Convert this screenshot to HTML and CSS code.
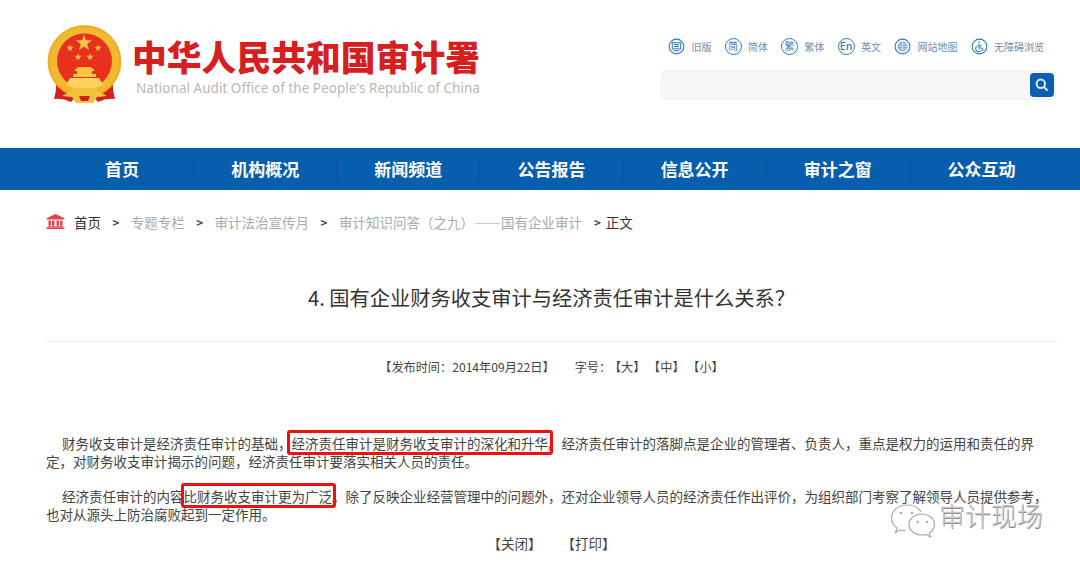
FILE: index.html
```html
<!DOCTYPE html>
<html lang="zh-CN">
<head>
<meta charset="utf-8">
<title>国有企业财务收支审计与经济责任审计是什么关系</title>
<link rel="stylesheet" href="styles.css">
</head>
<body>
<header class="top">
  <div class="brand">
    <svg class="emblem" viewBox="0 0 75 79" aria-hidden="true">
      <defs><path id="st" d="M0-10 2.350-3.240 9.510-3.090 3.800 1.240 5.880 8.090 0 4 -5.880 8.090 -3.800 1.240 -9.510-3.090 -2.350-3.240z"/></defs>
      <path d="M9 52 Q10 64 7 74 Q16 73 24 77 L34 66 Z" fill="#d3201f"/>
      <path d="M66 52 Q65 64 68 74 Q59 73 51 77 L41 66 Z" fill="#d3201f"/>
      <ellipse cx="37.500" cy="36.500" rx="37" ry="36.500" fill="#f2b92f"/>
      <ellipse cx="37.500" cy="36.500" rx="35.500" ry="35" fill="none" stroke="#e6a01d" stroke-width=".8"/>
      <ellipse cx="37.500" cy="36" rx="27.500" ry="27.500" fill="#e8301f"/>
      <use href="#st" transform="translate(37 18) scale(.85)" fill="#f9c63d"/>
      <use href="#st" transform="translate(23 23) scale(.38)" fill="#f9c63d"/>
      <use href="#st" transform="translate(51 23) scale(.38)" fill="#f9c63d"/>
      <use href="#st" transform="translate(31 32) scale(.38)" fill="#f9c63d"/>
      <use href="#st" transform="translate(43 32) scale(.38)" fill="#f9c63d"/>
      <path d="M31 42 H44 L48 46 H45 V49 H49 V52 H26 V49 H30 V46 H27 Z" fill="#f9c63d"/>
      <path d="M23 53 H52 L56 60 Q37.500 68 19 60 Z" fill="#fbd25e"/>
      <path d="M26 65 Q31 60 37.500 64 Q44 60 49 65 L60 71 L50 72 L46 78 H29 L25 72 L15 71 Z" fill="#f5c23e"/>
      <path d="M32 71 H43 L41 76 H34 Z" fill="#d3201f"/>
    </svg>
    <div class="brand-text">
      <div class="brand-cn">中华人民共和国审计署</div>
      <div class="brand-en">National Audit Office of the People's Republic of China</div>
    </div>
  </div>
  <div class="tools">
    <ul class="links">
      <li><svg class="ic" viewBox="0 0 18 18"><circle cx="9" cy="9" r="7.800"/><rect x="4.500" y="5" width="9" height="6.500"/><path d="M6.500 7h5M6.500 9h5M6 13.500h6"/></svg>旧版</li>
      <li><span class="ic-t">简</span>简体</li>
      <li><span class="ic-t">繁</span>繁体</li>
      <li><span class="ic-t en">En</span>英文</li>
      <li><svg class="ic" viewBox="0 0 18 18"><circle cx="9" cy="9" r="7.800"/><circle cx="9" cy="9" r="5.400" class="fill"/><path class="w" d="M3.600 9h10.800M9 3.600v10.800M4.500 6.500h9M4.500 11.500h9"/></svg>网站地图</li>
      <li><svg class="ic" viewBox="0 0 18 18"><circle cx="9" cy="9" r="7.800"/><circle cx="8.400" cy="4.600" r="1.100" class="fill"/><path d="M8.400 6.400v4.200h3.200l1.300 3M8.400 8.200h2.800M6.800 8.400a3.100 3.100 0 1 0 4 4.200"/></svg>无障碍浏览</li>
    </ul>
    <div class="search">
      <button class="search-btn" aria-label="搜索"><svg viewBox="0 0 16 16"><circle cx="6.800" cy="6.800" r="4.200"/><path d="M10 10l3.600 3.600"/></svg></button>
    </div>
  </div>
</header>

<nav class="nav">
  <a>首页</a><a>机构概况</a><a>新闻频道</a><a>公告报告</a><a>信息公开</a><a>审计之窗</a><a>公众互动</a>
</nav>

<div class="crumbs">
  <svg class="home" viewBox="0 0 20 16"><path d="M10 0l9.500 4.600v1.200H.5V4.600z"/><path d="M2.500 6.800h2.600v5.600H2.500zM6.300 6.800h2.600v5.600H6.300zM11.100 6.800h2.600v5.600h-2.600zM14.900 6.800h2.600v5.600h-2.600zM1.500 13h17v1H1.500zM.5 14.500h19V16H.5z"/></svg>
  <span class="dark">首页</span><b>&gt;</b><span>专题专栏</span><b>&gt;</b><span>审计法治宣传月</span><b>&gt;</b><span>审计知识问答（之九）——国有企业审计</span><b class="tight">&gt;</b><span class="dark">正文</span>
</div>

<main class="article">
  <h1>4. 国有企业财务收支审计与经济责任审计是什么关系？</h1>
  <div class="meta"><span>【发布时间：2014年09月22日】</span><span><span class="lead">字号：</span>【大】 【中】 【小】</span></div>
  <div class="body">
    <p>财务收支审计是经济责任审计的基础，<mark class="a">经济责任审计是财务收支审计的深化和升华。</mark>经济责任审计的落脚点是企业的管理者、负责人，重点是权力的运用和责任的界定，对财务收支审计揭示的问题，经济责任审计要落实相关人员的责任。</p>
    <p>经济责任审计的内容<mark class="b">比财务收支审计更为广泛。</mark>除了反映企业经营管理中的问题外，还对企业领导人员的经济责任作出评价，为组织部门考察了解领导人员提供参考，也对从源头上防治腐败起到一定作用。</p>
  </div>
  <div class="actions"><span>【关闭】</span><span>【打印】</span></div>
</main>

<div class="mark-wx">
  <svg viewBox="0 0 46 38"><path class="wx" d="M17 2C8 2 1.500 8 1.500 15c0 4 2 7.500 5.500 10l-1.500 4.500 5-2.500c1.500.4 3 .6 5 .6"/><path class="wx" d="M31 9C29 5 24 2 17 2"/><path class="wx" d="M32 11c-7 0-13 4.700-13 10.500S25 32 32 32c1.500 0 2.500-.2 4-.6l4.500 2.600-1.200-4c3.300-2.200 5.200-5 5.200-8 0-6-5.500-11-12.500-11z"/><circle cx="11" cy="10" r="1.300"/><circle cx="22" cy="10" r="1.300"/><circle cx="27.500" cy="19" r="1.200"/><circle cx="37" cy="19" r="1.200"/></svg>
  <span>审计现场</span>
</div>
</body>
</html>
```
FILE: styles.css
```css
* { box-sizing: border-box; }
html, body { margin: 0; padding: 0; }
body {
  width: 1080px;
  height: 565px;
  overflow: hidden;
  position: relative;
  background: #fff;
  color: #333;
  font-family: "Noto Sans CJK SC", "Noto Sans", sans-serif;
}
.top {
  height: 148px;
  padding: 25px 24px 0 47px;
  display: flex;
  justify-content: space-between;
  align-items: flex-start;
}
.brand { display: flex; gap: 10px; }
.emblem { width: 75px; height: 79px; flex: none; }
.brand-text { padding-top: 8px; }
.brand-cn {
  font-size: 34.800px;
  line-height: 46px;
  font-weight: 900;
  color: #d6201f;
  white-space: nowrap;
}
.brand-en {
  margin-left: 4px;
  font-family: "Noto Sans", sans-serif;
  font-size: 13.500px;
  line-height: 18px;
  letter-spacing: .03px;
  color: #b8b8b8;
  white-space: nowrap;
}
.tools { width: 395px; padding-top: 11px; }
.links {
  list-style: none;
  margin: 0 0 14px;
  padding: 0 0 0 7px;
  display: flex;
  gap: 13px;
  height: 20px;
  align-items: center;
}
.links li {
  display: flex;
  align-items: center;
  gap: 6.500px;
  font-size: 10px;
  color: #6b8fb3;
  white-space: nowrap;
}
.ic { width: 17px; height: 17px; fill: none; stroke: #2f78bd; stroke-width: 1.100; flex: none; }
.ic .fill { fill: #7fa9d2; stroke: none; }
.ic .w { stroke: #fff; stroke-width: .6; }
.ic-t {
  width: 17px;
  height: 17px;
  border: 1.200px solid #2f78bd;
  border-radius: 50%;
  color: #2f78bd;
  font-size: 10px;
  line-height: 14px;
  text-align: center;
  flex: none;
}
.ic-t.en { font-size: 10.500px; font-weight: 500; font-family: "Noto Sans", sans-serif; }
.search {
  height: 30px;
  background: #f7f7f7;
  border: 1px solid #f1f1f1;
  border-radius: 5px;
  display: flex;
  justify-content: flex-end;
  align-items: center;
  padding-right: 1px;
}
.search-btn {
  width: 24px;
  height: 24px;
  padding: 4px;
  border: 0;
  border-radius: 4px;
  background: #0b5fae;
  display: flex;
}
.search-btn svg { width: 16px; height: 16px; fill: none; stroke: #dfeaf5; stroke-width: 2; }
.nav {
  height: 42px;
  background: #075eac;
  padding: 0 27px 0 51px;
  display: grid;
  grid-template-columns: repeat(7, 1fr);
  align-items: center;
}
.nav a {
  height: 24px;
  line-height: 24px;
  text-align: center;
  font-size: 17px;
  font-weight: 700;
  color: #fff;
  border-right: 1px solid #0a5499;
}
.nav a:last-child { border-right: 0; }
.crumbs {
  height: 29px;
  margin-top: 17px;
  padding-left: 46px;
  display: flex;
  align-items: center;
  font-size: 13.500px;
  color: #aaa;
  white-space: nowrap;
}
.home { width: 19px; height: 15px; fill: #e2404a; flex: none; margin-right: 9px; }
.crumbs b { font-weight: 700; color: #444; margin: 0 11.500px; font-size: 11.500px; }
.crumbs b.tight { margin: 0 5px 0 12px; }
.crumbs .dark { color: #333; }
.article { padding: 0 23px 0 46px; }
h1 {
  margin: 47px 0 0;
  height: 59px;
  border-bottom: 1px solid #eee;
  text-align: center;
  font-size: 20.250px;
  line-height: 30px;
  font-weight: 400;
  color: #333;
}
.meta {
  margin-top: 15px;
  height: 20px;
  display: flex;
  justify-content: center;
  gap: 20px;
  font-size: 12.150px;
  line-height: 20px;
  color: #444;
}
.lead { margin-right: 4px; }
.body { margin-top: 57px; color: #444; }
.body p {
  margin: 0 0 17px;
  font-size: 13.500px;
  line-height: 18px;
  text-indent: 16px;
}
.body p:last-child { margin-bottom: 0; }
.body mark { background: none; color: inherit; position: relative; }
.body mark::after {
  content: "";
  position: absolute;
  top: -3px;
  bottom: -2px;
  border: 3px solid #f01010;
  border-radius: 3px;
}
.body mark.a::after { left: -5px; right: 9px; }
.body mark.b::after { left: -3px; right: 10px; }
.actions {
  margin-top: 11px;
  display: flex;
  justify-content: center;
  gap: 20px;
  font-size: 13.500px;
  line-height: 18px;
  color: #444;
}
.mark-wx {
  position: absolute;
  left: 890px;
  top: 497px;
  display: flex;
  align-items: flex-start;
  gap: 3px;
  color: #c6c6c6;
  font-size: 26px;
  font-weight: 300;
  line-height: 36px;
  text-shadow: .6px .6px 0 #8c8c8c;
}
.mark-wx svg { width: 46px; height: 38px; margin-top: 6px; fill: #aaa; }
.mark-wx .wx { fill: rgba(255,255,255,.6); stroke: #aaa; stroke-width: 1.200; }
```
